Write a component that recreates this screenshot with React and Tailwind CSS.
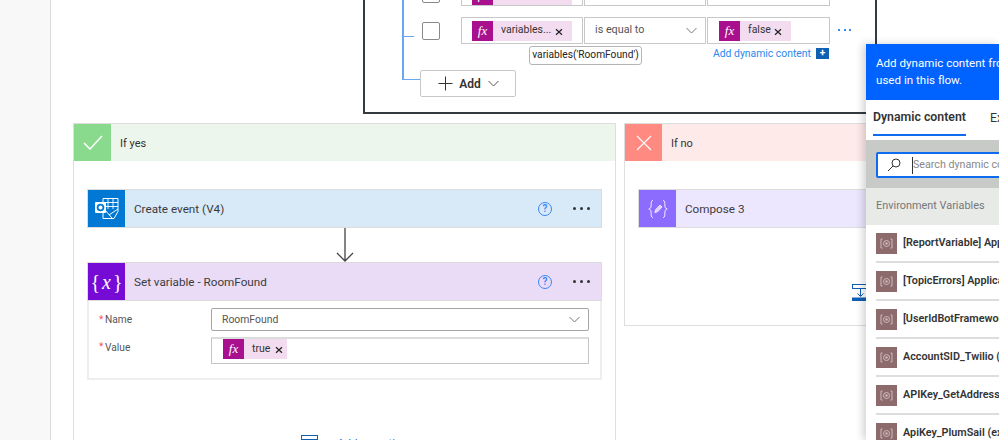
import React from "react";

function Fx() {
  return (
    <span className="w-[21px] h-5 bg-[#a9108e] text-white flex items-center justify-center font-['Liberation_Serif',serif] italic text-[13px] shrink-0">
      fx
    </span>
  );
}

function X() {
  return (
    <svg width="8" height="8" viewBox="0 0 8 8" className="shrink-0 mt-[2px]">
      <path d="M1 1.2L7 6.8M7 1.2L1 6.8" stroke="#222" strokeWidth="1.2" fill="none" />
    </svg>
  );
}

function Chip({ text, w, textW }) {
  return (
    <div className={`flex items-center bg-[#f3dcef] ${w} h-5`}>
      <Fx />
      <span className={`${textW} pl-2 text-[10.5px] text-[#333] leading-none whitespace-nowrap`}>{text}</span>
      <X />
    </div>
  );
}

function Chevron({ color = "#777" }) {
  return (
    <svg width="11" height="7" viewBox="0 0 11 7" className="shrink-0">
      <path d="M0.5 1L5.5 6L10.5 1" stroke={color} strokeWidth="1" fill="none" />
    </svg>
  );
}

function Help() {
  return (
    <span className="w-[14px] h-[14px] rounded-full border border-[#3a86f5] text-[#3a86f5] flex items-center justify-center text-[10px] font-semibold leading-none shrink-0">
      ?
    </span>
  );
}

function Dots() {
  return (
    <div className="flex gap-[4px] items-center">
      <span className="w-[3px] h-[3px] rounded-full bg-[#333]" />
      <span className="w-[3px] h-[3px] rounded-full bg-[#333]" />
      <span className="w-[3px] h-[3px] rounded-full bg-[#333]" />
    </div>
  );
}

function BlueDots() {
  return (
    <div className="flex gap-[3.5px] items-center">
      <span className="w-[2px] h-[2px] bg-[#3a8bf0]" />
      <span className="w-[2px] h-[2px] bg-[#3a8bf0]" />
      <span className="w-[2px] h-[2px] bg-[#3a8bf0]" />
    </div>
  );
}

function OutlookIcon() {
  return (
    <svg width="24" height="21" viewBox="0 0 24 21">
      <path d="M8 0.5H23V13.5L19 20.5H8Z" fill="#0078d4" stroke="#fff" strokeWidth="1" />
      <path d="M13 0.5V11M18 0.5V11M8 4.5H23M8 8.5H23" stroke="#fff" strokeWidth="0.9" />
      <path d="M10 12L17 20M23 11L14 17" stroke="#fff" strokeWidth="1" fill="none" />
      <rect x="0" y="4" width="11" height="11" rx="1" fill="#fff" />
      <circle cx="5.5" cy="9.5" r="2.9" fill="none" stroke="#0078d4" strokeWidth="1.8" />
    </svg>
  );
}

function ComposeIcon() {
  return (
    <svg width="20" height="20" viewBox="0 0 20 20" fill="none" stroke="#fff" strokeWidth="1">
      <path d="M5 1.5C2.5 1.5 3.5 5 3 7.5C2.8 9 2 9.7 0.8 10C2 10.3 2.8 11 3 12.5C3.5 15 2.5 18.5 5 18.5" />
      <path d="M15 1.5C17.5 1.5 16.5 5 17 7.5C17.2 9 18 9.7 19.2 10C18 10.3 17.2 11 17 12.5C16.5 15 17.5 18.5 15 18.5" />
      <path d="M6.8 13.6L7.5 10.8L12 6L14 8L9.5 12.8Z" fill="#d9cffd" stroke="#ffffff" strokeWidth="0.7" />
    </svg>
  );
}

function VariableIcon() {
  return (
    <span className="w-[37px] h-full bg-[#770bd6] text-white flex items-center justify-center shrink-0 font-['Liberation_Serif',serif] text-[20px] font-light leading-none">
      {"{"}
      <span className="italic mx-[2px]">x</span>
      {"}"}
    </span>
  );
}

function EnvIcon() {
  return (
    <span className="w-[21px] h-[21px] bg-[#8d6a6b] flex items-center justify-center shrink-0">
      <svg width="13" height="11" viewBox="0 0 13 11" fill="none" stroke="#cdbcbc" strokeWidth="1">
        <path d="M2.5 1H1V10H2.5M10.5 1H12V10H10.5" />
        <circle cx="6.5" cy="5.5" r="3" />
        <circle cx="6.5" cy="5.5" r="1.2" fill="#cdbcbc" stroke="none" />
      </svg>
    </span>
  );
}

function AddActionIcon() {
  return (
    <svg width="17" height="17" viewBox="0 0 17 17" className="shrink-0">
      <rect x="0.5" y="0.5" width="16" height="4" fill="none" stroke="#0f5fb5" strokeWidth="1" />
      <path d="M8.5 4.5V12M5.5 9.5L8.5 12.5L11.5 9.5" fill="none" stroke="#0f5fb5" strokeWidth="1" />
      <rect x="0" y="13.5" width="17" height="3.5" fill="#0f5fb5" />
    </svg>
  );
}

function CardHeader({ icon, text, bg }) {
  return (
    <div className={`h-[39px] flex items-center ${bg} border border-[#dcdcdc] pr-[10px]`}>
      {icon}
      <span className="ml-[9px] mt-[3px] text-[11.7px] text-[#3b3b3b] flex-1 whitespace-nowrap">{text}</span>
      <Help />
      <span className="w-[21px]" />
      <Dots />
      <span className="w-[1px]" />
    </div>
  );
}

function Branch({ children, headerBg, iconBg, icon, title, className = "" }) {
  return (
    <section className={`w-[543px] border border-[#dedede] shrink-0 ${className}`}>
      <div className={`h-[37px] flex items-center ${headerBg}`}>
        <span className={`w-[37px] h-full ${iconBg} flex items-center justify-center`}>{icon}</span>
        <span className="ml-[9px] mt-[3px] text-[11px] text-[#333]">{title}</span>
      </div>
      <div className="px-[13px] pt-[28px]">{children}</div>
    </section>
  );
}

function AddAction() {
  return (
    <div className="flex gap-[19px] items-start pl-[214px]">
      <AddActionIcon />
      <span className="mt-[3px] text-[11.6px] text-[#1a6fd0] whitespace-nowrap leading-none">Add an action</span>
    </div>
  );
}

function Input({ children, w, className = "" }) {
  return (
    <div className={`${w} h-[27px] border border-[#c8c8c8] flex items-center shrink-0 bg-white ${className}`}>{children}</div>
  );
}

function EnvRow({ text }) {
  return (
    <div className="h-[38px] flex items-start pt-[8px]">
      <EnvIcon />
      <span className="ml-[6px] mt-[3px] text-[10.8px] font-semibold text-[#333] whitespace-nowrap leading-[14px]">{text}</span>
    </div>
  );
}

export default function App() {
  return (
    <div className="relative w-[999px] h-[440px] overflow-hidden bg-white flex font-['Roboto',sans-serif]">
      <aside className="w-[51px] h-full bg-[#f8f8f8] border-r border-[#dcdcdc] shrink-0" />
      <main className="pl-[22px] flex flex-col min-w-0 flex-1">
        <div className="h-[123px] shrink-0">
          <div className="ml-[290px] w-[514px] h-[114px] border-x-2 border-b-2 border-[#333a40] overflow-hidden">
            <div className="-mt-[21px] ml-[37px] flex">
              <div className="w-[2px] h-[101px] bg-[#6aa6f2] shrink-0" />
              <div className="flex-1">
                <div className="flex h-[27px]">
                  <span className="w-[16px]" />
                  <span className="w-[18px] h-[18px] mt-[6px] ml-[2px] border border-[#8a8a8a] rounded-[2px]" />
                  <span className="w-[21px]" />
                  <Input w="w-[122px]" className="pl-[10px]">
                    <div className="w-[100px] h-5 bg-[#f3dcef] mt-1">
                      <Fx />
                    </div>
                  </Input>
                  <Input w="w-[122px]" className="ml-[1px]" />
                  <Input w="w-[123px]" className="ml-[1px]" />
                </div>
                <div className="flex h-[27px] mt-[11px] relative">
                  <span className="w-[10px] h-px bg-[#6aa6f2] mt-[19px] mr-[6px]" />
                  <span className="w-[18px] h-[18px] mt-[5px] ml-[2px] border border-[#8a8a8a] rounded-[2px]" />
                  <span className="w-[21px]" />
                  <Input w="w-[122px]" className="pl-[10px]">
                    <Chip text="variables..." w="w-[100px]" textW="w-[62px]" />
                  </Input>
                  <Input w="w-[122px]" className="ml-[1px] pl-[10px] pr-[8px] justify-between">
                    <span className="text-[10.8px] text-[#555]">is equal to</span>
                    <Chevron />
                  </Input>
                  <Input w="w-[123px]" className="ml-[1px] pl-[11px]">
                    <Chip text="false" w="w-[72px]" textW="w-[34px]" />
                  </Input>
                  <span className="ml-[8px] self-center -mt-px">
                    <BlueDots />
                  </span>
                  <div className="absolute left-[125px] top-[29px] h-[19px] w-[113px] border border-[#b5b5b5] rounded-[3px] bg-white flex items-center justify-center text-[10.2px] text-[#222] whitespace-nowrap leading-none">
                    variables('RoomFound')
                  </div>
                </div>
                <div className="h-[26px] flex justify-end items-start pt-[2px] pr-[46px] gap-[5px]">
                  <span className="text-[10.4px] text-[#2b88ee] leading-[16px] whitespace-nowrap">Add dynamic content</span>
                  <span className="w-[13px] h-[11px] mt-[2px] bg-[#0f5fb5] text-white text-[10px] font-bold leading-[10px] text-center">+</span>
                </div>
                <div className="flex">
                  <span className="w-[16px] h-px bg-[#6aa6f2] mt-[9px]" />
                  <button className="w-[96px] h-[27px] border border-[#c8c8c8] rounded-[2px] flex items-center pl-[17px] bg-white">
                    <svg width="15" height="15" viewBox="0 0 15 15">
                      <path d="M7.5 0.5V14.5M0.5 7.5H14.5" stroke="#333" strokeWidth="1" fill="none" />
                    </svg>
                    <span className="ml-[6px] w-[22px] text-[12px] font-semibold text-[#333]">Add</span>
                    <span className="ml-[7px]">
                      <Chevron color="#555" />
                    </span>
                  </button>
                </div>
              </div>
            </div>
          </div>
        </div>

        <div className="flex gap-[8px]">
          <Branch
            headerBg="bg-[#ecf6ed]"
            iconBg="bg-[#89da8d]"
            title="If yes"
            icon={
              <svg width="20" height="15" viewBox="0 0 20 15">
                <path d="M1 8L7 14L19 1" stroke="#fff" strokeWidth="1.5" fill="none" />
              </svg>
            }
          >
            <CardHeader
              bg="bg-[#d8e9f8]"
              text="Create event (V4)"
              icon={
                <span className="w-[37px] h-full bg-[#0078d4] flex items-center justify-center shrink-0">
                  <OutlookIcon />
                </span>
              }
            />
            <div className="h-[34px] flex justify-center">
              <svg width="18" height="34" viewBox="0 0 18 34">
                <path d="M9 0V33M1 25L9 33L17 25" stroke="#444" strokeWidth="1.3" fill="none" />
              </svg>
            </div>
            <div className="border-2 border-t-0 border-[#eeeeee]">
              <div className="-mx-[2px]">
                <CardHeader bg="bg-[#eadcf7]" text="Set variable - RoomFound" icon={<VariableIcon />} />
              </div>
              <div className="pt-[7px] pb-[14px] pl-[10px] pr-[11px]">
                <div className="flex items-center h-[23px]">
                  <span className="text-[#f0506e] text-[10px] w-[6px]">*</span>
                  <span className="text-[10.2px] text-[#555] flex-1">Name</span>
                  <div className="w-[378px] h-[23px] border border-[#a5a5a5] rounded-[2px] flex items-center justify-between pl-[10px] pr-[8px]">
                    <span className="text-[10.4px] text-[#555]">RoomFound</span>
                    <Chevron />
                  </div>
                </div>
                <div className="flex items-start mt-[6px]">
                  <span className="text-[#f0506e] text-[10px] w-[6px] mt-[2px]">*</span>
                  <span className="text-[10.2px] text-[#555] flex-1 mt-[3px]">Value</span>
                  <div className="w-[378px] h-[27px] border border-[#c5c5c5] border-t-2 border-t-[#dcdcdc] flex items-start pl-[11px]">
                    <Chip text="true" w="w-[64px]" textW="w-[31px]" />
                  </div>
                </div>
              </div>
            </div>
            <div className="pt-[55px] h-[80px]">
              <AddAction />
            </div>
          </Branch>

          <Branch
            className="h-[203px]"
            headerBg="bg-[#ffeaea]"
            iconBg="bg-[#ff8a82]"
            title="If no"
            icon={
              <svg width="16" height="16" viewBox="0 0 16 16">
                <path d="M1 1L15 15M15 1L1 15" stroke="#fff" strokeWidth="1.1" fill="none" />
              </svg>
            }
          >
            <CardHeader
              bg="bg-[#ece7ff]"
              text="Compose 3"
              icon={
                <span className="w-[37px] h-full bg-[#8c6cff] flex items-center justify-center shrink-0">
                  <ComposeIcon />
                </span>
              }
            />
            <div className="pt-[56px]">
              <AddAction />
            </div>
          </Branch>
        </div>
      </main>

      <div className="absolute left-[856px] top-[48px] w-[20px] h-[20px] flex items-center">
        <svg width="12" height="24" viewBox="0 0 12 24">
          <path d="M12 0L0 12L12 24Z" fill="#fff" />
        </svg>
      </div>
      <div className="absolute left-[866px] top-[44px] right-0 bottom-0 bg-white shadow-[-3px_0_8px_rgba(0,0,0,0.18)] overflow-hidden">
        <div className="h-[56px] bg-[#0062ff] pl-[10px] pt-[11px] text-white text-[11.6px] leading-[17px] whitespace-nowrap">
          <div>Add dynamic content from the apps and connectors</div>
          <div>used in this flow.</div>
        </div>
        <div className="h-[40px] flex items-start pl-[7px] whitespace-nowrap">
          <div className="h-[36px] w-[95px] border-b-2 border-[#0f6cf0] flex items-center justify-center text-[12.3px] font-semibold text-[#333]">
            Dynamic content
          </div>
          <div className="h-[36px] ml-[24px] flex items-center text-[12.3px] text-[#333]">Expression</div>
        </div>
        <div className="h-[48px] bg-[#c8cac8] pl-[10px] pt-[12px]">
          <div className="w-[200px] h-[26px] bg-white border-2 border-[#0f6cf0] rounded-[2px] flex items-center pl-[9px]">
            <svg width="14" height="14" viewBox="0 0 14 14" fill="none" stroke="#333" strokeWidth="1" className="shrink-0">
              <circle cx="9" cy="5" r="4" />
              <path d="M6 8L1 13" />
            </svg>
            <span className="ml-[11px] w-px h-[17px] bg-[#333] shrink-0" />
            <span className="text-[10.7px] text-[#888] whitespace-nowrap">Search dynamic content</span>
          </div>
        </div>
        <div className="h-[37px] bg-[#e8eae8] pl-[10px] flex items-center text-[10.9px] text-[#777] whitespace-nowrap">
          Environment Variables
        </div>
        <div className="pl-[10px] divide-y-2 divide-[#dddddd]">
          <EnvRow text="[ReportVariable] Application name" />
          <EnvRow text="[TopicErrors] Application name" />
          <EnvRow text="[UserIdBotFramework] Application" />
          <EnvRow text="AccountSID_Twilio (env)" />
          <EnvRow text="APIKey_GetAddressID (env)" />
          <EnvRow text="ApiKey_PlumSail (expression)" />
        </div>
      </div>
    </div>
  );
}
